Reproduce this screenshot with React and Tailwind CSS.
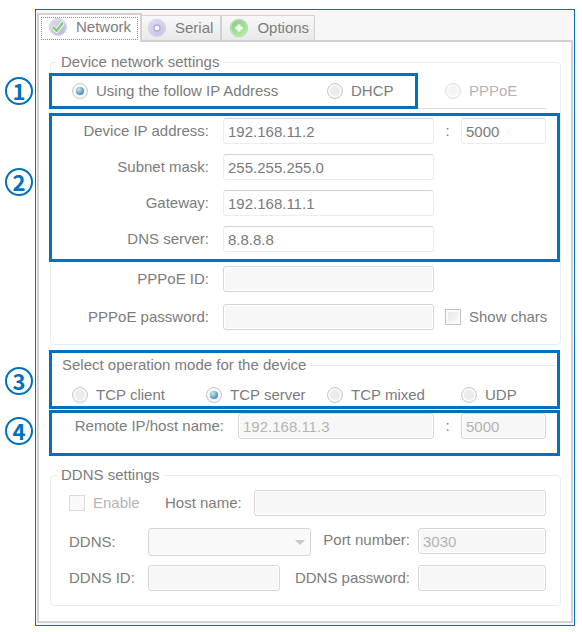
const fieldBase = "h-[26px] w-full min-w-0 rounded-[3px] border px-1 outline-none";
const fieldOn = "border-[#ececf2] border-t-[#d2d2d6] bg-white text-[#7a7a7a]";
const fieldOff = "border-[#d6d6d6] bg-[#f7f7f7] text-[#b4b4b4] shadow-[inset_0_0_0_1px_#ffffff]";

function Field({ id, disabled, className = "", ...rest }) {
  return (
    <input
      id={id}
      type="text"
      disabled={disabled}
      className={`${fieldBase} ${disabled ? fieldOff : fieldOn} ${className}`}
      {...rest}
    />
  );
}

function Radio({ name, label, disabled, ...rest }) {
  return (
    <label className={`flex items-center gap-2 whitespace-nowrap ${disabled ? "text-[#b4b4b4]" : ""}`}>
      <input
        type="radio"
        name={name}
        disabled={disabled}
        className="grid size-4 flex-none appearance-none place-items-center rounded-full border border-[#c8c8c8] bg-[#ececec] shadow-[inset_0_0_0_2px_#fafafa] before:size-2 before:rounded-full checked:before:bg-[radial-gradient(circle_at_35%_30%,#c4ecf8,#5f9dbd_60%,#4a7896)] disabled:border-[#dedede] disabled:bg-[#f5f5f5]"
        {...rest}
      />
      {label}
    </label>
  );
}

function Check({ label, disabled }) {
  return (
    <label className={`flex items-center gap-2 whitespace-nowrap ${disabled ? "text-[#b4b4b4]" : ""}`}>
      <input
        type="checkbox"
        disabled={disabled}
        className="size-4 flex-none appearance-none border border-[#c2c2c2] bg-linear-to-br from-[#e4e5e8] to-[#fafafa] shadow-[inset_0_0_0_2px_#fafafa] disabled:border-[#dadada] disabled:from-[#f7f7f7] disabled:to-[#fcfcfc]"
      />
      {label}
    </label>
  );
}

function Callout({ number, place, className = "", children }) {
  return (
    <div className={`relative border-3 border-[#0070c0] ${className}`}>
      <span
        className={`absolute -left-[47px] flex size-7 items-center justify-center rounded-full border-2 border-[#0070c0] pb-[3px] font-['Noto_Sans_CJK_JP','Noto_Sans_CJK_SC',sans-serif] text-[22px] leading-none font-bold text-[#0070c0] ${place}`}
      >
        {number}
      </span>
      {children}
    </div>
  );
}

function AddressRow({ id, label, value, port, disabled, wide, children }) {
  return (
    <div
      className={`grid items-center ${wide ? "grid-cols-[186px_1fr_27px_85px]" : "grid-cols-[171px_1fr_27px_85px]"}`}
    >
      <label htmlFor={id} className="pr-3.5 text-right whitespace-nowrap">
        {label}
      </label>
      <Field id={id} defaultValue={value} disabled={disabled} />
      {port && (
        <>
          <span className="text-center">:</span>
          <Field aria-label={`${label} port`} defaultValue={port} disabled={disabled} />
        </>
      )}
      {children}
    </div>
  );
}

function Group({ title, className = "", children }) {
  return (
    <fieldset className={className}>
      <legend className="ml-1.5 px-1">{title}</legend>
      {children}
    </fieldset>
  );
}

function Orb({ children, from, to, rim, id }) {
  return (
    <svg viewBox="0 0 20 20" className="size-5 flex-none" aria-hidden="true">
      <defs>
        <linearGradient id={id} x1="0" y1="0" x2="0.6" y2="1">
          <stop offset="0" stopColor={from} />
          <stop offset="1" stopColor={to} />
        </linearGradient>
      </defs>
      <circle cx="10" cy="10" r="8.8" fill="#e9e9f0" stroke={rim} strokeWidth="0.6" />
      <circle cx="10" cy="10" r="8" fill={`url(#${id})`} />
      {children}
    </svg>
  );
}

export default function App() {
  return (
    <div className="bg-white pt-[9px] pr-[7px] pb-1.5 pl-[35px] font-['Liberation_Sans',Arial,sans-serif] text-[15px] leading-5 text-[#7c7c7c]">
      <main className="border border-[#0070c0] bg-[#f7f7f7] px-px pb-0.5">
        <div role="tablist" className="flex h-[30px] items-end">
          <button
            role="tab"
            aria-selected="true"
            className="relative z-10 -mb-0.5 h-[29px] border-2 border-b-0 border-[#d0d0d5] bg-white px-0.5 pt-0.5 pb-1"
          >
            <span className="flex h-[23px] items-center gap-2 border border-dotted border-[#8a8a8a] px-1.5 pb-1">
              <Orb id="orb-network" from="#dedeee" to="#bdbbd6" rim="#c6c6d0">
                <path d="M5.5 10.5l3.2 3.3 5.6-7.4" fill="none" stroke="#fff" strokeWidth="4.2" strokeLinecap="round" strokeLinejoin="round" />
                <path d="M5.5 10.5l3.2 3.3 5.6-7.4" fill="none" stroke="#86cd80" strokeWidth="2.6" strokeLinecap="round" strokeLinejoin="round" />
              </Orb>
              Network
            </span>
          </button>
          <button
            role="tab"
            aria-selected="false"
            className="flex h-[25px] items-center gap-2 border-t border-r-2 border-[#d0d0d5] bg-linear-to-b from-[#f8f8f8] to-[#e9e9e9] pr-[7px] pl-[5px]"
          >
            <Orb id="orb-serial" from="#dcdcf2" to="#c6c5e6" rim="#c6c6d6">
              <circle cx="10" cy="10" r="3" fill="#f6f6fb" stroke="#b0afd8" strokeWidth="1.4" />
            </Orb>
            Serial
          </button>
          <button
            role="tab"
            aria-selected="false"
            className="flex h-[25px] items-center gap-2 border-t border-r border-[#d0d0d5] bg-linear-to-b from-[#f8f8f8] to-[#e9e9e9] pr-[5px] pl-[7px]"
          >
            <Orb id="orb-options" from="#86cf80" to="#a9ec98" rim="#a2b8a4">
              <path d="M10 6.5v7M6.5 10h7" stroke="#fff" strokeWidth="2.8" />
            </Orb>
            Options
          </button>
        </div>

        <div className="border-2 border-[#d0d0d5] bg-white pt-2.5 pr-2.5 pb-[15px] pl-[11px]">
          <Group title="Device network settings" className="rounded border border-[#e6eef2] pb-3.5">
            <div className="mt-px -ml-0.5 flex">
              <Callout number="1" place="top-px" className="grid h-9 w-[369px] flex-none grid-cols-[255px_auto] items-center pl-5">
                <Radio name="addressing" label="Using the follow IP Address" defaultChecked />
                <Radio name="addressing" label="DHCP" />
              </Callout>
              <div className="mr-3.5 flex flex-1 items-center border-b border-[#dcdcdc] pl-[27px]">
                <Radio name="addressing" label="PPPoE" disabled />
              </div>
            </div>

            <Callout number="2" place="top-[52px]" className="mt-1 -ml-0.5 flex flex-col gap-2.5 pt-0.5 pr-[11px] pb-[7px]">
              <AddressRow id="device-ip" label="Device IP address:" value="192.168.11.2" port="5000" />
              <AddressRow id="subnet" label="Subnet mask:" value="255.255.255.0" />
              <AddressRow id="gateway" label="Gateway:" value="192.168.11.1" />
              <AddressRow id="dns" label="DNS server:" value="8.8.8.8" />
            </Callout>

            <div className="flex flex-col gap-3 pt-1 pr-3.5 pl-px">
              <AddressRow id="pppoe-id" label="PPPoE ID:" disabled />
              <AddressRow id="pppoe-password" label="PPPoE password:" disabled>
                <div className="col-span-2 pl-[11px]">
                  <Check label="Show chars" />
                </div>
              </AddressRow>
            </div>
          </Group>

          <Callout number="3" place="top-3.5" className="mt-[5px] mr-px -ml-px h-[59px] pt-0.5">
            <Group title="Select operation mode for the device" className="border-t border-[#e6eef2]">
              <div className="grid grid-cols-[134px_121px_134px_auto] pt-2.5 pl-5">
                <Radio name="mode" label="TCP client" />
                <Radio name="mode" label="TCP server" defaultChecked />
                <Radio name="mode" label="TCP mixed" />
                <Radio name="mode" label="UDP" />
              </div>
            </Group>
          </Callout>

          <Callout number="4" place="top-1" className="mt-px mr-px -ml-px pr-[11px] pb-3.5">
            <AddressRow id="remote" label="Remote IP/host name:" value="192.168.11.3" port="5000" disabled wide />
          </Callout>

          <Group title="DDNS settings" className="mt-[9px] rounded border border-[#e6eef2] pb-3.5">
            <div className="flex flex-col pt-[5px] pr-3.5 pl-[18px]">
              <div className="flex items-center">
                <Check label="Enable" disabled />
                <label htmlFor="ddns-host" className="w-[114px] flex-none pr-3 text-right">
                  Host name:
                </label>
                <Field id="ddns-host" disabled />
              </div>
              <div className="mt-3 flex items-start">
                <label htmlFor="ddns" className="w-[79px] flex-none pt-1">
                  DDNS:
                </label>
                <div className="relative min-w-0 flex-1">
                  <select
                    id="ddns"
                    disabled
                    className="h-7 w-full appearance-none rounded-[3px] border border-[#d6d6d6] bg-[#f9f9f9] opacity-100"
                  />
                  <svg viewBox="0 0 10 5" className="absolute top-3 right-1.5 h-[5px] w-2.5" aria-hidden="true">
                    <path d="M0 0h10L5 5z" fill="#c8c8c8" />
                  </svg>
                </div>
                <label htmlFor="ddns-port" className="w-[107px] flex-none pt-0.5 pr-2 text-right">
                  Port number:
                </label>
                <div className="w-32 flex-none">
                  <Field id="ddns-port" defaultValue="3030" disabled />
                </div>
              </div>
              <div className="mt-[9px] flex items-center">
                <label htmlFor="ddns-id" className="w-[79px] flex-none">
                  DDNS ID:
                </label>
                <div className="min-w-0 flex-1">
                  <Field id="ddns-id" disabled />
                </div>
                <label htmlFor="ddns-password" className="w-[138px] flex-none pr-2 text-right">
                  DDNS password:
                </label>
                <div className="w-32 flex-none">
                  <Field id="ddns-password" disabled />
                </div>
              </div>
            </div>
          </Group>
        </div>
      </main>
    </div>
  );
}
